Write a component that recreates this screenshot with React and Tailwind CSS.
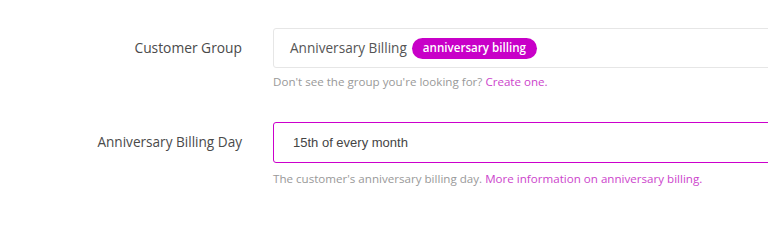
export default function App() {
  const sans = { fontFamily: '"Open Sans", "Noto Sans", sans-serif' };
  return (
    <div className="w-[768px] h-[200px] overflow-hidden bg-white" style={sans}>
      <div className="w-[1000px] pt-[28px] grid grid-cols-[242px_1fr] gap-x-[31px]">
        <div className="h-[40px] flex items-center justify-end text-[13.8px] text-[#4a4a4a]">
          Customer Group
        </div>
        <div>
          <div className="h-[40px] flex items-center pl-[16px] border border-[#e6e6e6] rounded-[3px] text-[13.6px] text-[#555]">
            <span>Anniversary Billing</span>
            <span className="ml-[5px] h-[21px] px-[11px] flex items-center rounded-full bg-[#c800c8] text-white text-[11.6px] font-semibold">
              anniversary billing
            </span>
          </div>
          <p className="mt-[6px] text-[11.6px] leading-[16px] text-[#999]">
            Don't see the group you're looking for?{' '}
            <a className="text-[#cc44cc]">Create one.</a>
          </p>
        </div>

        <div className="mt-[32px] h-[41px] flex items-center justify-end text-[13.6px] text-[#4a4a4a]">
          Anniversary Billing Day
        </div>
        <div className="mt-[32px]">
          <div
            className="h-[41px] flex items-center pl-[19px] border border-[#cc00cc] rounded-[3px] text-[13px] text-[#444]"
            style={{ fontFamily: '"Liberation Sans", Arial, sans-serif' }}
          >
            15th of every month
          </div>
          <p className="mt-[8px] text-[11.6px] leading-[16px] text-[#999]">
            The customer's anniversary billing day.{' '}
            <a className="text-[#cc44cc]">More information on anniversary billing.</a>
          </p>
        </div>
      </div>
    </div>
  );
}
